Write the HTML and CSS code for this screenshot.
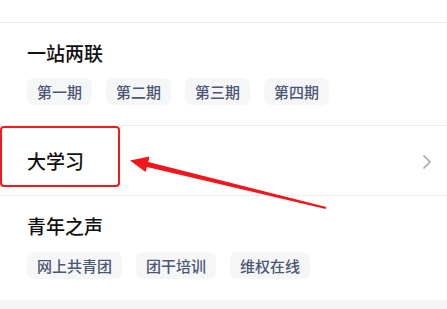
FILE: index.html
```html
<!DOCTYPE html>
<html lang="zh">
<head>
<meta charset="utf-8">
<link rel="stylesheet" href="styles.css">
</head>
<body>
<div class="page">
  <div class="top"></div>
  <section class="group">
    <div class="title">一站两联</div>
    <div class="chips">
      <span class="chip">第一期</span>
      <span class="chip">第二期</span>
      <span class="chip">第三期</span>
      <span class="chip">第四期</span>
    </div>
  </section>
  <div class="row">
    <span class="row-title">大学习</span>
    <svg class="chev" width="10" height="16" viewBox="0 0 10 16"><polyline points="1.5,1.5 8,8 1.5,14.5" fill="none" stroke="#a6a6a6" stroke-width="1.6"/></svg>
  </div>
  <section class="group last">
    <div class="title">青年之声</div>
    <div class="chips">
      <span class="chip">网上共青团</span>
      <span class="chip">团干培训</span>
      <span class="chip">维权在线</span>
    </div>
  </section>
  <div class="footer"></div>
  <div class="highlight"></div>
  <svg class="arrow" width="447" height="309" viewBox="0 0 447 309">
    <polygon fill="#f5141a" points="130,160.5 149.5,156.5 148.3,161.9 326.3,207 325.8,209 146.9,166.9 145.6,172"/>
  </svg>
</div>
</body>
</html>
```
FILE: styles.css
```css
html, body {
  margin: 0;
  padding: 0;
  background: #ffffff;
}
.page {
  position: relative;
  width: 447px;
  height: 309px;
  overflow: hidden;
  font-family: "Noto Sans CJK SC", "Noto Sans", sans-serif;
  color: #1a1a1a;
}
.top {
  height: 22px;
  border-bottom: 1px solid #ededed;
}
.group {
  padding: 17px 27px 20px;
  border-bottom: 1px solid #ededed;
}
.group.last {
  padding: 17px 27px 21px;
  border-bottom: none;
}
.title {
  font-size: 19px;
  line-height: 26px;
  font-weight: 500;
  color: #111111;
}
.chips {
  display: flex;
  gap: 14px;
  margin-top: 12px;
}
.group.last .chips {
  margin-top: 13px;
}
.chip {
  display: inline-flex;
  align-items: center;
  height: 27px;
  padding: 0 10px;
  border-radius: 7px;
  background: #f5f6f8;
  color: #4d5675;
  font-size: 15px;
  font-weight: 500;
}
.row {
  display: flex;
  align-items: center;
  justify-content: space-between;
  height: 69px;
  padding: 0 15px 0 27px;
  border-bottom: 1px solid #ededed;
}
.row-title {
  font-size: 19px;
  font-weight: 500;
  color: #111111;
}
.chev {
  display: block;
  margin-top: 2px;
}
.footer {
  height: 9px;
  background: #f5f5f5;
}
.highlight {
  position: absolute;
  left: 0;
  top: 126px;
  width: 116px;
  height: 57px;
  border: 2.5px solid #f01c1c;
  border-radius: 4px;
}
.arrow {
  position: absolute;
  left: 0;
  top: 0;
}
```
